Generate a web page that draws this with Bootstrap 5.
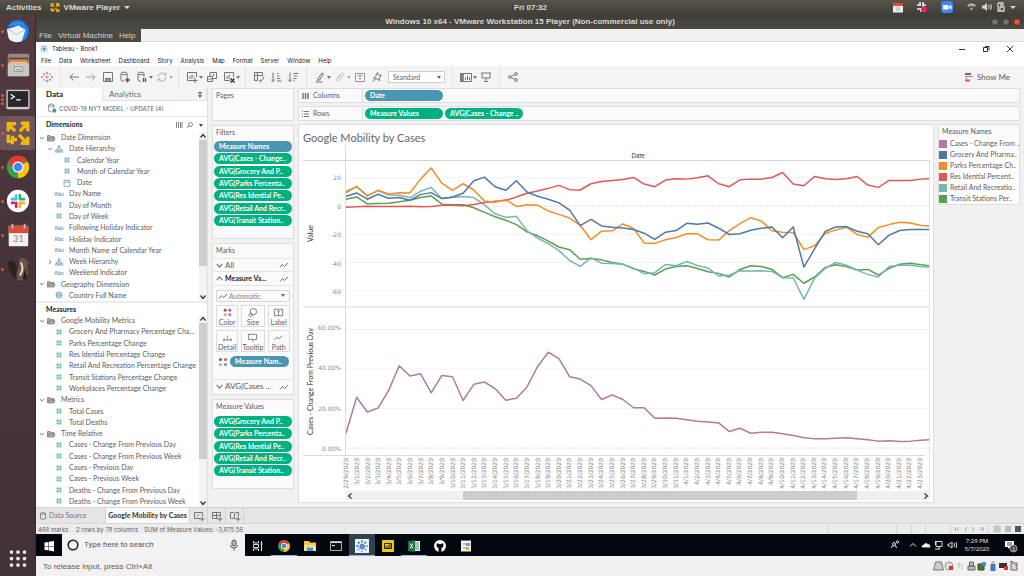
<!DOCTYPE html>
<html lang="en">
<head>
<meta charset="utf-8">
<meta name="viewport" content="width=device-width, initial-scale=1">
<title>Windows 10 x64 - VMware Workstation 15 Player</title>
<link rel="stylesheet" href="https://cdn.jsdelivr.net/npm/bootstrap@5.3.0/dist/css/bootstrap.min.css">
<style>
:root{--tab-blue:#4996b2;--tab-green:#00b180;--line:#dedede;--ink:#5c5c5c}
html,body{height:100%}
body{font:7px/9px Lato,"Liberation Sans",sans-serif;color:var(--ink);background:#f2f0f1}
svg{display:block;flex:none}
button,.plain{border:0;background:none;padding:0;margin:0;color:inherit;font:inherit;text-decoration:none;text-align:left;white-space:nowrap}
h1,h2,h3,ul{margin:0;padding:0;font-size:inherit;line-height:inherit;list-style:none}
.shrinky{min-height:0;min-width:0}
.ic{width:12px;height:12px;fill:none;stroke:#757575;stroke-width:1}
.fs8{font-size:8px}
.host{font-family:"Liberation Sans",sans-serif;font-size:8px}
/* host desktop */
.topbar{height:14px;background:linear-gradient(#57544a,#403e39);color:#dcd9d2;font-weight:700;padding:0 8px 0 6px}
.topbar .now{padding-left:38px}
.topbar .drop::after{border-width:3px 3px 0;border-top-color:#dcd9d2}
.tray{gap:13px}
.dock{width:36px;background:linear-gradient(#543a40,#46343a 40%,#413237);border-right:1px solid #37282d}
.dock button{height:34px;position:relative;width:100%}
.dock button::before{content:"";position:absolute;left:1px;top:16px;width:3px;height:3px;border-radius:50%;background:#e2562a}
.dock button.multi::before{box-shadow:0 -4px #e2562a,0 4px #e2562a}
.dock button.current{background:#6d565b;border-radius:2px}
.dock svg{width:26px;height:28px;margin:0 auto}
.dock button.apps::before{display:none}
.wintitle{height:15px;background:linear-gradient(#3f3d38,#4b4943);color:#dbd8cf;font-weight:700;gap:3px;padding:0 3px 0 36px}
.dot{width:8px;height:8px;border-radius:50%;background:#75726b;border:1px solid #33312c}
.dot.shut{background:#e8552b}
.vmmenu{height:13px;border-bottom:1px solid #ddd}
.vmmenu nav{background:#4b4944;color:#d6d3cc;width:105px;height:13px;gap:6px;padding-left:3px}
/* application window */
.ui{font-family:Inter,"Open Sans",sans-serif;font-size:6px}
.apptop{background:#fff;color:#222;height:24px}
.appname{height:13px;padding:0 10px 0 4px}
.appname .wb{gap:16px}
.menus{gap:8px;padding-left:5px;height:11px}
.toolbar{height:22px;background:#f4f4f4;gap:5px;padding:0 14px 0 5px}
.toolbar .caret{width:5px;margin-right:-2px;margin-left:-5px}
.vsep{width:1px;height:22px;background:#e2e2e2;margin:0 2px}
.caret::after{content:"";display:block;margin:auto;width:0;border:2px solid transparent;border-top:3px solid #777;border-bottom:0}
.toolbar select{width:57px;height:12px;border:1px solid #cfcfcf;border-radius:0;background:#fff;font-size:7px;color:#666;padding:0 4px;appearance:none}
.pick{position:relative}
.pick::after{content:"";position:absolute;right:4px;top:5px;border:2px solid transparent;border-top:3px solid #666;border-bottom:0;pointer-events:none}
.work{background:#f1f1f1}
.datapane{width:172px;background:#fff;border-right:1px solid #e0e0e0}
.ptabs{height:13px;background:#f4f4f4}
.ptabs button{width:66px;padding-left:10px}
.ptabs .on{background:#fff;color:#222;font-weight:700;font-size:8px}
.ptabs .off{border:1px solid #e2e2e2;border-top:0;flex:1;padding-left:6px;color:#666;font-size:8px}
.dsrc{height:16px;padding-left:11px;border-bottom:1px solid #ececec}
.ptitle{color:#222;font-weight:700;padding-left:10px}
.dimhead{height:15px}
.dimwrap{flex:169 1 0;min-height:0}
.measbar{height:14px;border-top:2px solid #ececec}
.measwrap{flex:192 1 0;min-height:0}
.tree li{flex:1 1 0;min-height:0;display:flex;align-items:center;white-space:nowrap;padding-left:10px}
.tree .g{padding-left:2px}.tree .d{padding-left:18px}
.tree .chev{width:8px;height:8px;padding:1px;fill:none;stroke:#666;stroke-width:1}
.tree .sym{width:10px;height:8px;margin-right:5px;fill:none;stroke:#5d9bb4;stroke-width:.7;font:700 5px/8px "Liberation Sans",sans-serif;color:#5d9bb4;text-align:center;flex:none}
.tree.meas .sym{stroke:#42b38c}.tree .g .sym{stroke:#777}
.scroll{width:8px;background:#f3f3f3}
.scroll i{display:block;background:#cdcdcd}
.scroll svg,.hscroll svg{width:8px;height:8px;fill:none;stroke:#333;stroke-width:1.2}
/* shelves and cards */
.shelfcol{width:82px}
.box{background:#fafafa;border:1px solid var(--line)}
.box>h2{font-weight:400;padding:2px 3px 0}
.pages{height:33px}.filters{height:114px}.marks{height:152px}.mvals{height:90px}
.pills{padding-left:1px;margin-top:4px}
.seven{height:85px}.five{height:60px;margin-top:5px}
.pill{display:block;height:11px;line-height:11px;border-radius:6px;color:#fff;background:var(--tab-green);font-weight:700;padding:0 5px;white-space:nowrap;width:78px;text-decoration:none}
.pill.b{background:var(--tab-blue)}
.pill.short{width:59px;margin-left:1px}
.right{gap:3px}
.shelf{height:15px}
.shelf .pill{margin-left:2px}
.shelf .rowname{width:64px;padding-left:3px;height:13px;border-right:1px solid var(--line)}
.marks>h2{height:14px}
.mrow{height:14px;border-bottom:1px solid #e4e4e4;padding:0 3px 0 2px}
.mrow.first{border-top:1px solid #e4e4e4}
.mrow.last{border-bottom:0;border-top:1px solid #e4e4e4;margin-top:10px}
.mrow .chev{width:9px;height:9px;margin-right:1px;fill:none;stroke:#777}
.marktype{height:12px;margin:4px 3px 0;border:1px solid #d5d5d5}
.marktype select{border:0;background:none;appearance:none;font:inherit;color:#888;padding:0;width:100%;height:10px}
.marktype::after{top:3px}
.mgrid{display:grid;grid-template-columns:1fr 1fr 1fr;gap:3px;padding:3px 3px 2px}
.mk{height:22px;border:1px solid #dcdcdc;background:#fcfcfc;text-align:center}
.mk svg{margin:1px auto 0;width:11px;height:11px}
.enc{height:15px;padding-left:4px}
/* viz */
.viz{background:#fff;border:1px solid var(--line);padding:0 3px 2px 4px}
.viz h1{font-size:11px;line-height:14px;font-weight:400;color:#666;padding-top:6px}
.axis{width:43px;border-right:1px solid #dadada}
.axis .vert{color:#333;padding-right:3px}
.vert{writing-mode:vertical-rl;transform:rotate(180deg);white-space:nowrap}
.datehd{height:16px;border-bottom:1px solid #d4d4d4}
.datehd .cap{padding-top:6px;color:#333}
.ticks{font:6px/9px "DejaVu Sans",sans-serif;color:#8a8a8a;text-align:right;padding-right:4px}
.t1{padding-top:12px;padding-bottom:10px}.t2{padding-top:15px;padding-bottom:2px}
.p1{flex:146 1 0;min-height:0}.p2{flex:148 1 0;min-height:0;border-top:2px solid #ececec}
.plot{position:relative;border-right:1px solid #e2e2e2}
.plot svg{position:absolute;inset:0;width:100%;height:100%}
.plot path,.plot line{fill:none;vector-effect:non-scaling-stroke}
.axfoot{border-top:1px solid #dadada;border-right:0}
.dates{height:36px;font:6px/10px "DejaVu Sans",sans-serif;color:#858585;border-right:1px solid #e2e2e2}
.dates div{margin:0 4px 0 -5px;display:flex;height:100%}
.dates span{flex:1 1 0;width:0;display:flex;align-items:flex-start;justify-content:center;padding-top:2px;border-top:1px solid #dadada}
.hscroll{height:9px;background:#f0f0f0;margin-left:43px}
.hscroll i{height:9px;background:#cdcdcd}
.legend{width:82px}
.legend ul{padding-top:2px}
.legend li{height:11px;display:flex;align-items:center;gap:3px;white-space:nowrap;background:#fff}
.legend i{width:8px;height:8px;flex:none}
/* sheet tabs, status bar, taskbar */
.sheets{height:16px;background:#e5e5e5;border-top:1px solid #d5d5d5}
.sheets>*{border-right:1px solid #d2d2d2;height:15px}
.dsb{width:70px;padding-left:1px;color:#777}
.cur{background:#fafafa;width:84px;text-align:center;color:#333;font-weight:700}
.nb{width:18px;padding-left:3px}
.status{height:11px;background:#ececec;border-top:1px solid #d6d6d6;padding-left:2px;white-space:nowrap}
.s1{width:38px}.s2{width:68px}
.cell{border-left:1px solid #d6d6d6;height:10px}
.c1{width:68px}.c2{width:15px}.c3{width:14px}.c4{width:25px}.c5{width:38px}.c6{width:36px}
.taskbar{height:22px;background:#030810;color:#eee}
.taskbar .app{width:26px;height:22px;border-bottom:1px solid transparent;padding-top:3px}
.taskbar .app svg{width:14px;height:14px;margin:auto}
.taskbar .run{border-color:#76b9ed}
.taskbar .act{background:#33414c}
.search{width:183px;background:#f3f3f3}
.search input{border:0;background:none;font:8px/12px Roboto,Lato,sans-serif;color:#444;width:140px;padding:0;outline:0}
.search input::placeholder{color:#555;opacity:1}
.clock{font:6px/8px "Open Sans",sans-serif;text-align:center;width:38px;padding-top:3px}
.hint{height:20px;color:#5c5c5c;padding-left:7px}
</style>
</head>
<body class="d-flex flex-column overflow-hidden">

<svg width="0" height="0" class="position-absolute">
  <symbol id="hash" viewBox="0 0 10 8"><path d="M3.800 1v6M6.200 1v6M2 2.800h6M2 5.200h6"/></symbol>
  <symbol id="folder" viewBox="0 0 10 8"><path d="M1.500 7V1.500h2.500l1 1h3v1.500M1.500 7l1.500-3h6L8 7z" fill="#aaa"/></symbol>
  <symbol id="hier" viewBox="0 0 10 8"><path d="M4 .8h2v1.600H4zM5 2.500V4M2.500 5.500V4h5v1.500M1.500 5.600h2v1.600h-2zM4.200 5.600h1.600v1.600H4.200zM6.500 5.600h2v1.600h-2z"/></symbol>
  <symbol id="cal" viewBox="0 0 10 8"><path d="M2 1.500h6V7.300H2zM2 3.300h6M3.500.5v1.200M6.500.5v1.200"/></symbol>
  <symbol id="globe" viewBox="0 0 10 8"><circle cx="5" cy="4" r="3"/><path d="M2 4h6M5 1v6M3.500 1.500q-1 2.500 0 5M6.500 1.500q1 2.500 0 5"/></symbol>
  <symbol id="down" viewBox="0 0 8 8"><path d="M1.500 2.500L4 5.500l2.500-3"/></symbol>
  <symbol id="up" viewBox="0 0 8 8"><path d="M1.500 5.500L4 2.500l2.500 3"/></symbol>
  <symbol id="right" viewBox="0 0 8 8"><path d="M2.500 1.500L5.500 4l-3 2.500"/></symbol>
  <symbol id="left" viewBox="0 0 8 8"><path d="M5.500 1.500L2.500 4l3 2.500"/></symbol>
  <symbol id="zig" viewBox="0 0 12 12"><path d="M2 8.500l2.500-3 2 2L10 4"/></symbol>
  <symbol id="dots" viewBox="0 0 12 12" stroke="none"><circle cx="3.500" cy="3.500" r="1.600" fill="#7a5a8c"/><circle cx="8.500" cy="3.500" r="1.600" fill="#e8565c"/><circle cx="3.500" cy="8.500" r="1.600" fill="#f2a45c"/><circle cx="8.500" cy="8.500" r="1.600" fill="#6d92bd"/></symbol>
  <symbol id="tableau" viewBox="0 0 12 12" stroke-width=".8"><path d="M6 4.200v3.600M4.200 6h3.600" stroke="#e8762c"/><path d="M6 .8v2.400M4.800 2h2.400M6 8.800v2.400M4.800 10h2.400" stroke="#5c7fb0"/><path d="M3 2.200v2M2 3.200h2M9 7.800v2M8 8.800h2" stroke="#e04c50"/><path d="M9 2.200v2M8 3.200h2M3 7.800v2M2 8.800h2" stroke="#eb9140"/><path d="M1 5.200v1.600M.3 6h1.500M11 5.200v1.600M10.300 6h1.500" stroke="#5f6694"/></symbol>
  <symbol id="book" viewBox="0 0 12 12"><path d="M0 0h12v12H0z" fill="#eaf2fa"/><path d="M6 1v10M1 6h10M2.500 2.500l7 7M9.500 2.500l-7 7" stroke="#4a86c5" stroke-width="1.500" stroke-dasharray="2 1"/></symbol>
  <symbol id="chrome" viewBox="0 0 28 28"><circle cx="14" cy="14" r="12" fill="#2fa24c"/><path d="M14 14L24.400 8A12 12 0 0 1 14 26z" fill="#fbc116"/><path d="M3.600 8L9 17l5-8.500h11L24.400 8A12 12 0 0 0 3.600 8z" fill="#e33b2e"/><circle cx="14" cy="14" r="6" fill="#fff"/><circle cx="14" cy="14" r="4.700" fill="#4285f4"/></symbol>
  <symbol id="vmw" viewBox="0 0 28 28"><path d="M12 4H3.500v8M4 5l7 7M17 3.500h7.500V12M24 4l-8 8M3.500 16v7H8M24.500 18v7H17M15 16l9 9M8 17v9M8 21h5" fill="none" stroke="#f2b60d" stroke-width="3.600"/></symbol>
  <symbol id="cyl" viewBox="0 0 12 12"><ellipse cx="5" cy="2.500" rx="3" ry="1.300"/><path d="M2 2.500v6.500q0 1.300 3 1.300M8 2.500v3.500"/></symbol>
</svg>

<header class="topbar host d-flex align-items-center flex-shrink-0">
  <button class="me-2">Activities</button>
  <svg width="10" height="11" class="me-1"><use href="#vmw"/></svg>
  <button>VMware Player</button><span class="caret drop ms-1"></span>
  <span class="now mx-auto">Fri 07:32</span>
  <div class="tray d-flex align-items-center">
    <svg width="10" height="11" viewBox="0 0 10 11"><path d="M0 1h10v9.500H0z" fill="#eee"/><path d="M0 1h10v3H0z" fill="#e04a38"/><path d="M3 6h4M3 8h4" stroke="#aaa"/></svg>
    <svg width="12" height="12" viewBox="0 0 12 12"><path d="M4 1v4M1 4h4M7 1v5M5 8H1M5 7v4M7 4h3" stroke="#eee" stroke-width="1.600"/><circle cx="8" cy="8.500" r="3" fill="#e8206b"/></svg>
    <svg width="12" height="12" viewBox="0 0 12 12"><rect width="12" height="12" rx="3" fill="#3b87f5"/><path d="M2 4h5.500v4.500H2zM8 5.500L10.500 4v4.500L8 7z" fill="#fff"/></svg>
    <svg width="50" height="12" viewBox="0 0 50 12" fill="#d8d5ce"><path d="M1 4q4.500-3.500 9 0L8.500 6q-3-2-6 0zM4 7q1.500-1 3 0L5.500 10z" opacity=".7"/><path d="M16 4.500h2l3-2.500v8l-3-2.500h-2z"/><path d="M22.500 4q1.500 2 0 4M24.500 3q2 3 0 6" fill="none" stroke="#d8d5ce"/><path d="M32 2h5v3M32 2v8h3M34 6h4v4h-4zM34 4h2" fill="none" stroke="#d8d5ce" stroke-width="1.300"/><path d="M44 5h6l-3 3z"/></svg>
  </div>
</header>

<div class="d-flex flex-grow-1 shrinky">
<aside class="dock d-flex flex-column flex-shrink-0">
  <button aria-label="Thunderbird"><svg viewBox="0 0 28 28"><circle cx="14" cy="14" r="12" fill="#1c66c0"/><path d="M3 9q8-9 17-4l5 8-2 8q-5 5-9 4l8-9-4-8z" fill="#2c8ae8"/><path d="M2 12l13-4 7 5-4 12q-9 3-14-3z" fill="#eef2f7"/><path d="M4 12l8 6 9-5" fill="none" stroke="#b7c2d0"/></svg></button>
  <button aria-label="Files"><svg viewBox="0 0 28 28"><rect x="3" y="2" width="23" height="24" rx="2" fill="#8f8d88"/><path d="M4 6h21v4H4z" fill="#5c4c42"/><path d="M5 8h19v3H5z" fill="#ef7e3c"/><path d="M5 11h19v1H5z" fill="#f5d8b8"/><rect x="3" y="12" width="23" height="14" rx="1" fill="#c9c7c2"/><path d="M10 16h9v5h-9z" fill="#e6e4e0" stroke="#908e88"/><path d="M12 19h5" stroke="#777"/></svg></button>
  <button aria-label="Terminal" class="multi"><svg viewBox="0 0 28 28"><rect x="1.500" y="4" width="25" height="21" rx="1.500" fill="#cfcdc9"/><rect x="3" y="5.500" width="22" height="17" fill="#26282b"/><path d="M6 9l4 2.500L6 14M12 15h5" fill="none" stroke="#fff" stroke-width="1.300"/></svg></button>
  <button aria-label="VMware Player" class="current"><svg viewBox="0 0 28 28"><use href="#vmw"/></svg></button>
  <button aria-label="Chrome"><svg><use href="#chrome"/></svg></button>
  <button aria-label="Slack"><svg viewBox="0 0 28 28"><circle cx="14" cy="14" r="12" fill="#fff"/><g stroke-width="2.800" stroke-linecap="round"><path d="M12 8v4M7.500 12H12" stroke="#36c5f0"/><path d="M16 7.500V12M16 12h4.500" stroke="#2eb67d"/><path d="M12 16v4.500M7.500 16h2" stroke="#e01e5a"/><path d="M16 16h4.500M16 18v2.500" stroke="#ecb22e"/></g></svg></button>
  <button aria-label="Calendar"><svg viewBox="0 0 28 28"><rect x="4" y="4" width="21" height="22" rx="1" fill="#f3f2f0"/><path d="M4 4h21v8H4z" fill="#dd4b3c"/><path d="M8 2v5M21 2v5" stroke="#c9c6c2" stroke-width="1.600"/><text x="14.500" y="22" text-anchor="middle" font-size="10" fill="#8a8a8a">31</text></svg></button>
  <button aria-label="DBeaver"><svg viewBox="0 0 28 28"><path d="M3 6q7-3 9 4l4 16Q4 24 3 6z" fill="#2c221f"/><path d="M15 4q3-4 8 0l3 3-2 2 1 9-4 8h-8q-2-9 2-14z" fill="#6e5344"/><path d="M17 7q4 6-1 14" fill="none" stroke="#e8e0d8" stroke-width="2"/><path d="M22 12l1 13h-4z" fill="#211a18"/></svg></button>
  <button class="apps mt-auto" aria-label="Show applications"><svg viewBox="0 0 28 28" fill="#e9e5e3"><g id="a3"><circle cx="7" cy="6.500" r="2"/><circle cx="14" cy="6.500" r="2"/><circle cx="21" cy="6.500" r="2"/></g><use href="#a3" y="7"/><use href="#a3" y="14"/></svg></button>
</aside>

<div class="d-flex flex-column flex-grow-1 shrinky">
  <div class="wintitle host d-flex align-items-center flex-shrink-0">
    <span class="mx-auto">Windows 10 x64 - VMware Workstation 15 Player (Non-commercial use only)</span>
    <button class="dot" aria-label="Minimize"></button><button class="dot" aria-label="Maximize"></button><button class="dot shut" aria-label="Close"></button>
  </div>
  <div class="vmmenu host flex-shrink-0"><nav class="d-flex align-items-center"><button>File</button><button>Virtual Machine</button><button>Help</button></nav></div>

  <div class="apptop ui flex-shrink-0">
    <div class="appname d-flex align-items-center">
      <svg width="8" height="8" class="me-1"><use href="#book"/></svg><span>Tableau - Book1</span>
      <span class="wb ms-auto d-flex">
        <button aria-label="Minimize"><svg width="8" height="8" stroke="#333"><path d="M1 4.500h6"/></svg></button>
        <button aria-label="Restore"><svg width="8" height="8" fill="none" stroke="#333"><path d="M1.500 2.500h4v4h-4zM3 1.500h4v4"/></svg></button>
        <button aria-label="Close"><svg width="8" height="8" stroke="#333"><path d="M1 1l6 6M7 1L1 7"/></svg></button>
      </span>
    </div>
    <nav class="menus d-flex" id="menu"></nav>
  </div>

  <div class="toolbar d-flex align-items-center flex-shrink-0">
    <button aria-label="Start page"><svg class="ic"><use href="#tableau"/></svg></button><span class="vsep"></span>
    <button aria-label="Undo"><svg class="ic"><path d="M11 6H2M5.500 2.500L2 6l3.500 3.500"/></svg></button>
    <button aria-label="Redo"><svg class="ic" opacity=".6"><path d="M1 6h9M6.500 2.500L10 6 6.500 9.500"/></svg></button>
    <button aria-label="Save"><svg class="ic"><path d="M1.500 1.500h9v9h-9z"/><path d="M3.500 7.500h5v3h-5z" fill="#999"/></svg></button>
    <button aria-label="New data source"><svg class="ic"><use href="#cyl"/><path d="M8.500 6.500v5M6 9h5" stroke-width="1.500" stroke="#555"/></svg></button>
    <button aria-label="Pause updates"><svg class="ic"><use href="#cyl"/><path d="M7.500 7v4M9.500 7v4" stroke-width="1.300" stroke="#555"/></svg></button><span class="caret"></span>
    <button aria-label="Refresh"><svg class="ic" opacity=".5"><path d="M2 6a4 4 0 0 1 7.500-2M10 6a4 4 0 0 1-7.500 2M7.500 4h2.500V1.500M4.500 8H2v2.500"/></svg></button><span class="caret opacity-50"></span><span class="vsep"></span>
    <button aria-label="New worksheet"><svg class="ic"><path d="M7 9.500H1.500v-8h9V6M4 8V5M6 8V3.500M8 6.500V5M9 7v5M6.500 9.500h5"/></svg></button><span class="caret"></span>
    <button aria-label="Duplicate"><svg class="ic"><path d="M1.500 5.500h5v5h-5zM4 5V1.500h6.500v6H7M3 9V7.500M5 9V7M7.500 5V3"/></svg></button>
    <button aria-label="Clear sheet"><svg class="ic"><path d="M7 9.500H1.500v-8h9V6M4 8V5M6 8V3.500"/><path d="M7.500 7.500l4 4M11.500 7.500l-4 4" stroke="#333" stroke-width="1.400"/></svg></button><span class="caret"></span><span class="vsep"></span>
    <button aria-label="Swap"><svg class="ic"><path d="M1.500 1.500h8v3h-5v5h-3zM4.500 1.500v3h-3M10.500 5.500q0 4.500-4 4.500M8 8.500L6.500 10 8 11.500"/></svg></button>
    <button aria-label="Sort ascending"><svg class="ic"><path d="M3 1.500v9M1 8.500l2 2 2-2M7 2.500h1.500M7 5h2.500M7 7.500h3.500M7 10h4.500"/></svg></button>
    <button aria-label="Sort descending"><svg class="ic"><path d="M3 1.500v9M1 8.500l2 2 2-2M6.500 2.500h5M6.500 5h4M6.500 7.500h3M6.500 10h1.500"/></svg></button><span class="vsep"></span>
    <button aria-label="Highlight"><svg class="ic"><path d="M4 8l4-6 1.500 1-4 6-2 .5zM1.500 11h7"/></svg></button><span class="caret"></span>
    <button aria-label="Group"><svg class="ic" opacity=".4"><path d="M3 7l4-4.500q2-1 2.500 1L5 9.500q-2.500 1-2-1.500l4-4"/></svg></button><span class="caret opacity-50"></span>
    <button aria-label="Labels"><svg class="ic"><path d="M1.500 2.500h9v8h-9zM4 4.500h4M6 4.500v4.500" stroke="#999"/></svg></button>
    <button aria-label="Pin"><svg class="ic"><path d="M6.500 1.500l1 2.500 3 .5L8 7l.5 2.500L5 7.500 2.500 7l2-1.500zM4.500 7.500L2 10.500"/></svg></button>
    <span class="pick"><select aria-label="Fit"><option>Standard</option></select></span><span class="vsep"></span>
    <button aria-label="Show cards"><svg class="ic"><path d="M.5 2.500h11v8H.5zM3 2.500v8M5.500 9V6.500M7.500 9V4.500M9.500 9V6"/><path d="M1 3h2v7H1z" fill="#999"/></svg></button><span class="caret"></span>
    <button aria-label="Presentation"><svg class="ic"><path d="M1 2h10M2 2v5h8V2M6 7v3.500M4 10.500h4"/></svg></button><span class="vsep"></span>
    <button aria-label="Share"><svg class="ic"><circle cx="3" cy="6" r="1.400"/><circle cx="9" cy="3" r="1.400"/><circle cx="9" cy="9" r="1.400"/><path d="M4.300 5.400l3.400-1.700M4.300 6.600l3.400 1.700"/></svg></button>
    <button class="ms-auto d-flex align-items-center gap-1"><svg width="8" height="9"><path d="M0 1h6" stroke="#7a5a8c" stroke-width="2"/><path d="M0 3.500h8" stroke="#6d92bd"/><path d="M0 5.500h3" stroke="#f2a45c"/><path d="M0 7.500h5" stroke="#e8565c" stroke-width="2"/></svg><span class="fs8">Show Me</span></button>
  </div>

  <main class="work d-flex flex-grow-1 shrinky">
    <section class="datapane d-flex flex-column flex-shrink-0">
      <div class="ptabs d-flex flex-shrink-0"><button class="on">Data</button><button class="off d-flex align-items-center">Analytics<svg class="ms-auto me-1" width="4" height="7" fill="#666"><path d="M2 0l2 3H0zM2 7l2-3H0z"/></svg></button></div>
      <div class="dsrc d-flex align-items-center ui flex-shrink-0"><svg class="ic" viewBox="0 0 14 14"><use href="#cyl" width="12" height="12"/><circle cx="8.500" cy="9" r="2.500" fill="#4996b2" stroke="none"/></svg>COVID-19 NYT MODEL - UPDATE (4)</div>
      <div class="dimhead ptitle d-flex align-items-center flex-shrink-0">Dimensions
        <svg class="ms-auto me-1" width="28" height="8" fill="none" stroke="#888"><path d="M1.500 1v6M3.500 1v6M5.500 1v6M7 1v6M12 7l2.500-2.500"/><circle cx="15.500" cy="3.500" r="2"/><path d="M24 3h4l-2 3z" fill="#444" stroke="none"/></svg></div>
      <div class="d-flex dimwrap"><ul class="tree flex-grow-1 d-flex flex-column" id="dims"></ul>
        <div class="scroll d-flex flex-column"><svg><use href="#up"/></svg><i style="flex:124"></i><b style="flex:26"></b><svg><use href="#down"/></svg></div></div>
      <div class="measbar ptitle d-flex align-items-center flex-shrink-0">Measures</div>
      <div class="d-flex measwrap"><ul class="tree meas flex-grow-1 d-flex flex-column" id="meas"></ul>
        <div class="scroll d-flex flex-column"><svg><use href="#up"/></svg><i style="flex:135"></i><b style="flex:40"></b><svg><use href="#down"/></svg></div></div>
    </section>

    <div class="shelfcol d-flex flex-column gap-1 mx-1 flex-shrink-0">
      <section class="box pages"><h2>Pages</h2></section>
      <section class="box filters"><h2>Filters</h2><div class="pills seven d-flex flex-column justify-content-between" id="filters"></div></section>
      <section class="box marks"><h2>Marks</h2>
        <div class="mrow first d-flex align-items-center"><svg class="chev"><use href="#down"/></svg><span class="fs8">All</span><svg class="ic ms-auto"><use href="#zig"/></svg></div>
        <div class="mrow d-flex align-items-center"><svg class="chev"><use href="#up"/></svg><b class="text-dark">Measure Va...</b><svg class="ic ms-auto"><use href="#zig"/></svg></div>
        <div class="marktype pick d-flex align-items-center"><svg class="ic"><use href="#zig"/></svg><select aria-label="Mark type"><option>Automatic</option></select></div>
        <div class="mgrid">
          <button class="mk"><svg class="ic"><use href="#dots"/></svg>Color</button>
          <button class="mk"><svg class="ic" viewBox="0 0 12 12"><circle cx="7" cy="5" r="3.500"/><circle cx="4" cy="8.500" r="1.800"/></svg>Size</button>
          <button class="mk"><svg class="ic" viewBox="0 0 12 12"><path d="M1.500 2.500h9v7h-9zM4.500 4.500h3M6 4.500v4"/></svg>Label</button>
          <button class="mk"><svg class="ic" viewBox="0 0 12 12"><circle cx="2.500" cy="8.500" r="1"/><circle cx="6" cy="8.500" r="1"/><circle cx="9.500" cy="8.500" r="1"/><path d="M6 4v2"/></svg>Detail</button>
          <button class="mk"><svg class="ic" viewBox="0 0 12 12"><path d="M1.500 2.500h9v5.500H8L6.500 10V8h-5z"/></svg>Tooltip</button>
          <button class="mk"><svg class="ic"><use href="#zig"/></svg>Path</button>
        </div>
        <div class="enc d-flex align-items-center"><svg class="ic"><use href="#dots"/></svg><a href="#" class="pill b short">Measure Nam..</a></div>
        <div class="mrow last d-flex align-items-center"><svg class="chev"><use href="#down"/></svg><span class="fs8">AVG(Cases ...</span><svg class="ic ms-auto"><use href="#zig"/></svg></div>
      </section>
      <section class="box mvals"><h2>Measure Values</h2><div class="pills five d-flex flex-column justify-content-between" id="mvals"></div></section>
    </div>

    <div class="right d-flex flex-column flex-grow-1 pe-1 shrinky">
      <div class="box shelf d-flex align-items-center flex-shrink-0"><span class="rowname d-flex align-items-center gap-1"><svg width="7" height="8" stroke="#777" stroke-width="1.500"><path d="M1 1v6M3.500 1v6M6 1v6"/></svg>Columns</span><a href="#" class="pill b">Date</a></div>
      <div class="box shelf d-flex align-items-center flex-shrink-0"><span class="rowname d-flex align-items-center gap-1"><svg width="7" height="8" stroke="#777"><path d="M0 1.500h1M2 1.500h5M0 4h1M2 4h5M0 6.500h1M2 6.500h5"/></svg>Rows</span><a href="#" class="pill">Measure Values</a><a href="#" class="pill">AVG(Cases - Change ..</a></div>
      <div class="d-flex flex-grow-1 gap-1 pb-1 shrinky">
        <section class="viz d-flex flex-column flex-grow-1 shrinky">
          <h1>Google Mobility by Cases</h1>
          <div class="datehd d-flex"><div class="axis"></div><div class="cap flex-grow-1 text-center ui">Date</div></div>
          <div class="p1 d-flex"><div class="axis d-flex align-items-stretch"><span class="vert text-center">Value</span><div class="ticks t1 ms-auto d-flex flex-column justify-content-between"><span>20</span><span>0</span><span>-20</span><span>-40</span><span>-60</span></div></div>
            <div class="plot flex-grow-1"><svg id="mobility" viewBox="0 32 1752 440" preserveAspectRatio="none"></svg></div></div>
          <div class="p2 d-flex"><div class="axis d-flex align-items-stretch"><span class="vert text-center">Cases - Change From Previous Day</span><div class="ticks t2 ms-auto d-flex flex-column justify-content-between"><span>60.00%</span><span>40.00%</span><span>20.00%</span><span>0.00%</span></div></div>
            <div class="plot flex-grow-1"><svg id="change" viewBox="0 -9 1752 445" preserveAspectRatio="none"></svg></div></div>
          <div class="d-flex"><div class="axis axfoot"></div><div class="dates flex-grow-1"><div id="dates"></div></div></div>
          <div class="hscroll d-flex align-items-center"><svg><use href="#left"/></svg><b style="flex:109"></b><i style="flex:396"></i><b style="flex:65"></b><svg><use href="#right"/></svg></div>
        </section>
        <aside class="legend box align-self-start"><h2>Measure Names</h2><ul id="legend"></ul></aside>
      </div>
    </div>
  </main>

  <div class="sheets d-flex flex-shrink-0 align-items-center">
    <button class="dsb d-flex align-items-center"><svg class="ic" viewBox="0 0 14 14"><path d="M4 4q3-2 6 0v6q-3 2-6 0zM4 4q3 2 6 0"/></svg>Data Source</button>
    <button class="cur">Google Mobility by Cases</button>
    <button class="nb" aria-label="New worksheet"><svg class="ic"><path d="M7 8.500H1.500v-6h8V6M4 6.500l2-2M9 6.500v5M6.500 9h5"/></svg></button>
    <button class="nb" aria-label="New dashboard"><svg class="ic"><path d="M7 8.500H1.500v-6h8V6M1.500 5.500h8M5.500 2.500v6M9 6.500v5M6.500 9h5"/></svg></button>
    <button class="nb" aria-label="New story"><svg class="ic"><path d="M6 8.500H1.500v-6h3l1 1 1-1h3V6M5.500 3.500v5M9 6.500v5M6.500 9h5"/></svg></button>
  </div>
  <div class="status ui d-flex flex-shrink-0 align-items-center"><span class="s1">468 marks</span><span class="s2">2 rows by 78 columns</span><span>SUM of Measure Values: -3,875.56</span>
    <span class="cell c1 ms-auto"></span><span class="cell c2"></span><span class="cell c3"></span><span class="cell c4"></span>
    <span class="cell c5"><svg width="34" height="10" fill="none" stroke="#aaa"><path d="M4.500 3v4M8 3L6 5l2 2M16 3l-2 2 2 2M21 3l2 2-2 2M29 3l2 2-2 2M32.500 3v4"/></svg></span>
    <span class="cell c6"><svg width="32" height="10"><path d="M5 2h6v6H5z" fill="none" stroke="#bbb"/><path d="M5 4h6M5 6h6M7 2v6M9 2v6" stroke="#bbb"/><path d="M16 2h6v6h-6z" fill="#bbb"/><path d="M26 2h6v6h-6z" fill="#555"/></svg></span></div>

  <div class="taskbar d-flex flex-shrink-0">
    <button class="app" aria-label="Start"><svg viewBox="0 0 14 14" fill="#fff"><path d="M2.500 3.500l4-.6v4h-4zM7 2.800l5-.8v5H7zM2.500 7.400h4v4l-4-.6zM7 7.400h5v5l-5-.8z"/></svg></button>
    <div class="search d-flex align-items-center"><svg width="22" height="14" fill="none" stroke="#222" stroke-width="1.600"><circle cx="11" cy="7" r="4.800"/></svg><input aria-label="Search" placeholder="Type here to search"><svg class="ms-auto me-1" width="14" height="12" fill="none" stroke="#555"><rect x="5" y="1" width="4" height="6" rx="2" fill="#bbb"/><path d="M3.500 6q0 3 3.500 3t3.500-3M7 9v2.500"/></svg></div>
    <button class="app" aria-label="Task view"><svg viewBox="0 0 14 14" fill="none" stroke="#ddd"><path d="M2.500 2v2h5V2M2.500 5.500h5v3h-5zM2.500 12v-2h5v2M10.500 2v10M9.500 5h2"/></svg></button>
    <button class="app run" aria-label="Chrome"><svg><use href="#chrome"/></svg></button>
    <button class="app" aria-label="Explorer"><svg viewBox="0 0 14 14"><path d="M1 2h5l1 1.500h6V12H1z" fill="#f6c944"/><path d="M1 6h12v6H1z" fill="#fbe08a"/><path d="M4 8.500h6V12H4z" fill="#3f9be0"/></svg></button>
    <button class="app" aria-label="Command prompt"><svg viewBox="0 0 14 14"><path d="M1.500 2.500h11v9h-11z" fill="#111" stroke="#aaa"/><path d="M1.500 3.500h11M3 6.500h3" stroke="#ddd"/></svg></button>
    <button class="app act run" aria-label="Tableau"><svg viewBox="0 0 12 12"><path d="M0 0h12v12H0z" fill="#eef1f5"/><use href="#book"/></svg></button>
    <button class="app" aria-label="Power BI"><svg viewBox="0 0 14 14"><rect x="1" y="1" width="12" height="12" rx="1" fill="#f2c811"/><path d="M3.500 4.500h7v5h-7zM5 9V7M7 9V6M9 9V5" fill="none" stroke="#222"/></svg></button>
    <button class="app run" aria-label="Excel"><svg viewBox="0 0 14 14"><path d="M6 2h7v10H6z" fill="#e8f3ec"/><path d="M8 4h4M8 6h4M8 8h4M8 10h4" stroke="#4ca36e"/><path d="M1 2l7-1v12l-7-1z" fill="#1d7044"/><path d="M3 4.500l3 5M6 4.500l-3 5" stroke="#fff"/></svg></button>
    <button class="app" aria-label="GitHub"><svg viewBox="0 0 14 14"><circle cx="7" cy="7" r="6" fill="#fff"/><path d="M4 4l1.500 1h3L10 4q1.500 4-1.500 5v4h-3V9Q2.500 8 4 4z" fill="#111"/></svg></button>
    <button class="app" aria-label="Notes"><svg viewBox="0 0 14 14"><path d="M2 1.500h10v11H2z" fill="#f2f2ee"/><path d="M4 5h3M4 9h6" stroke="#888"/><path d="M7 4h4v3H7z" fill="#5aaad8"/><path d="M7 8h3v3H7z" fill="#e0b640"/></svg></button>
    <svg class="ms-auto" width="68" height="22" fill="none" stroke="#ddd"><circle cx="4" cy="10" r="1.500"/><path d="M1.500 14q0-2.500 2.500-2.500T6.500 14"/><circle cx="7.500" cy="8" r="1.200"/><path d="M20 12.500l3-3 3 3"/><path d="M32 13q0-2 2-2 1-2.500 3-1 3 0 3 3z" fill="#fff"/><path d="M46 7.500h6v5h-6zM49 13v2M45 15h5M45.500 7v4"/><path d="M58 10h1.500l2.500-2v6l-2.500-2H58zM64 9q1 2 0 4M66 8q1.500 3 0 6"/></svg>
    <div class="clock">7:29 PM<br>5/7/2020</div>
    <svg class="ms-1 me-1" width="20" height="22"><path d="M5 7h9v6h-4l-2 2v-2H5z" fill="#fff"/><path d="M7 9h5M7 11h5" stroke="#444"/><circle cx="13.500" cy="14.500" r="3.500" fill="#444" stroke="#aaa"/><text x="12.200" y="16.500" font-size="5" fill="#fff">1</text></svg>
  </div>

  <footer class="hint host d-flex align-items-center flex-shrink-0"><span>To release input, press Ctrl+Alt</span>
    <svg class="ms-auto me-1" width="88" height="12" fill="none"><path d="M3.500 2h6l2 8h-10z" fill="#ccc" stroke="#777"/><circle cx="17" cy="6" r="4" fill="#ddd" stroke="#999"/><path d="M17 6h4v4h-4z" fill="#d63a32"/><path d="M27 3v5M30 4v5M25.500 4.500L27 3l1.500 1.500" stroke="#bbb"/><path d="M36 6h7v4h-7zM37.500 2h4v4h-4z" fill="#bbb" stroke="#666"/><path d="M46 4h6v6h-6z" fill="#51722c" stroke="#3a4c22"/><path d="M50 2h4v4h-4z" fill="#4c8ac2"/><path d="M58.500 4h5v7h-5z" fill="#3f78c2"/><path d="M59.500 1h3v3h-3z" fill="#bbb"/><path d="M67 3h8v5h-8z" fill="#333"/><path d="M72 6h4v4h-4z" fill="#d63a32"/><path d="M79 3h6v7h-6zM78 1.500h3M83 5h2" stroke="#666" fill="#d8d8d0"/></svg></footer>
</div>
</div>

<script src="https://cdn.jsdelivr.net/npm/bootstrap@5.3.0/dist/js/bootstrap.bundle.min.js"></script>
<script>
const $=id=>document.getElementById(id), use=(n,c)=>`<svg class="${c}"><use href="#${n}"/></svg>`;
$('menu').innerHTML=['File','Data','Worksheet','Dashboard','Story','Analysis','Map','Format','Server','Window','Help'].map(t=>`<button>${t}</button>`).join('');
const pills=a=>a.map(t=>`<a href="#" class="pill${t=='Measure Names'?' b':''}">${t}</a>`).join('');
const mv=['AVG(Grocery And P..','AVG(Parks Percenta..','AVG(Res Idential Pe..','AVG(Retail And Recr..','AVG(Transit Station..'];
$('filters').innerHTML=pills(['Measure Names','AVG(Cases - Change..',...mv]);
$('mvals').innerHTML=pills(mv);
// rows: level (g, n, d), icon, label, chevron
const row=([l,i,t,c])=>`<li class="${l}">${c?use(c,'chev'):'<span class="chev"></span>'}${i=='Abc'?'<span class="sym">Abc</span>':use(i,'sym')}<span>${t}</span></li>`;
$('dims').innerHTML=[['g','folder','Date Dimension','down'],['n','hier','Date Hierarchy','down'],['d','hash','Calendar Year'],['d','hash','Month of Calendar Year'],['d','cal','Date'],['n','Abc','Day Name'],['n','hash','Day of Month'],['n','hash','Day of Week'],['n','Abc','Following Holiday Indicator'],['n','Abc','Holiday Indicator'],['n','Abc','Month Name of Calendar Year'],['n','hier','Week Hierarchy','right'],['n','Abc','Weekend Indicator'],['g','folder','Geography Dimension','down'],['n','globe','Country Full Name']].map(row).join('');
const G=t=>['g','folder',t,'down'],M=t=>['n','hash',t];
$('meas').innerHTML=[G('Google Mobility Metrics'),M('Grocery And Pharmacy Percentage Cha...'),M('Parks Percentage Change'),M('Res Idential Percentage Change'),M('Retail And Recreation Percentage Change'),M('Transit Stations Percentage Change'),M('Workplaces Percentage Change'),G('Metrics'),M('Total Cases'),M('Total Deaths'),G('Time Relative'),M('Cases - Change From Previous Day'),M('Cases - Change From Previous Week'),M('Cases - Previous Day'),M('Cases - Previous Week'),M('Deaths - Change From Previous Day'),M('Deaths - Change From Previous Week')].map(row).join('');
$('legend').innerHTML=[['#b07aa1','Cases - Change From ..'],['#4e79a7','Grocery And Pharma..'],['#f28e2b','Parks Percentage Ch..'],['#e15759','Res Idential Percent..'],['#76b7b2','Retail And Recreatio..'],['#59a14f','Transit Stations Per..']].map(([c,t])=>`<li><i style="background:${c}"></i>${t}</li>`).join('');
// daily labels
let d=new Date(2020,1,29),h='';
for(let i=0;i<55;i++){h+=`<span><em class="vert fst-normal">${d.getMonth()+1}/${d.getDate()}/2020</em></span>`;d.setDate(d.getDate()+1)}
$('dates').innerHTML=h;
const path=(a,c)=>`<path stroke="${c}" stroke-width="1.500" stroke-linejoin="round" d="M${a.map((y,i)=>i*32+' '+y).join('L')}"/>`;
const grid=(a,z)=>a.map(y=>`<line x1="0" x2="1752" y1="${y}" y2="${y}" stroke="${y==z?'#e0e0e0':'#f3f3f3'}" ${y==z?'stroke-dasharray="2 1"':''}/>`).join('');
const green=[148,141,162,161,160,156,151,143,138,163,165,165,174,188,201,212,225,247,259,275,293,301,330,328,332,340,345,359,367,378,360,352,350,358,368,373,384,361,350,352,361,386,376,403,384,355,347,352,363,361,378,358,345,342,347,351];
const teal=[124,110,138,122,135,136,143,124,112,146,143,140,143,165,192,203,200,244,266,283,304,334,352,326,342,343,345,357,374,371,346,350,337,349,357,381,378,365,366,365,367,386,387,452,388,358,340,348,363,376,384,352,348,348,353,354];
const red=[172,171,169,170,170,170,169,171,170,166,166,168,164,158,154,152,141,130,123,115,106,119,120,101,94,91,88,82,102,110,90,86,87,83,77,101,110,89,87,87,82,67,102,107,79,86,88,86,79,105,112,91,91,91,87,85];
const orange=[129,109,138,121,132,128,129,87,53,99,121,101,120,153,157,149,170,165,166,184,194,205,227,271,245,244,223,237,281,282,271,264,253,253,271,272,243,222,204,214,244,248,249,301,289,252,241,233,255,263,234,225,218,220,228,230];
const blue=[139,129,148,133,145,143,151,134,128,146,141,130,92,81,110,121,92,126,139,148,159,181,228,209,229,233,235,240,251,270,248,243,221,224,220,236,255,253,242,236,232,265,232,354,299,246,232,231,245,253,286,257,243,240,240,240];
const cases=[370,261,306,294,241,166,197,190,248,195,199,271,222,215,235,270,264,230,168,125,144,199,206,226,268,254,268,293,293,325,324,325,329,334,336,339,365,355,370,367,367,372,377,384,387,387,385,384,387,390,394,393,395,394,391,389];
$('mobility').innerHTML=grid([83,169,254,340,426],169)+path(green,'#59a14f')+path(teal,'#76b7b2')+path(red,'#e15759')+path(orange,'#f28e2b')+path(blue,'#4e79a7');
$('change').innerHTML=grid([56,176,295,415],415)+path(cases,'#b07aa1');
</script>
</body>
</html>
